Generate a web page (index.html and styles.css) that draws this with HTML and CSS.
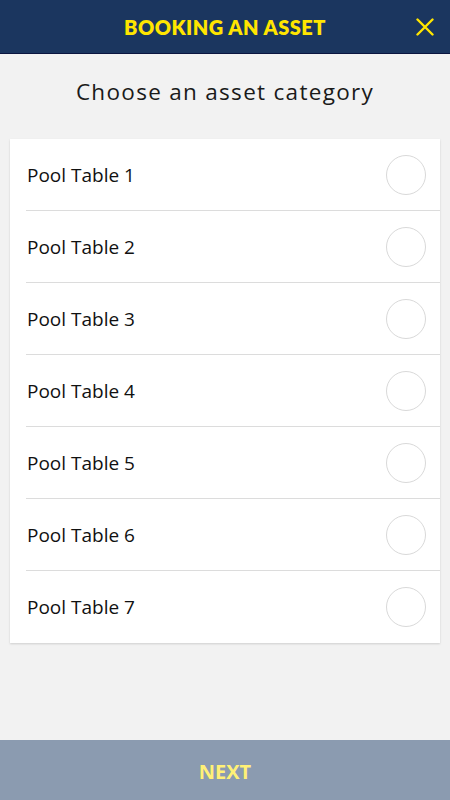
FILE: index.html
```html
<!DOCTYPE html>
<html>
<head>
<meta charset="utf-8">
<link rel="stylesheet" href="styles.css">
</head>
<body>
<div class="app">
  <header class="topbar">
    <div class="title">BOOKING AN ASSET</div>
    <svg class="close" width="18" height="18" viewBox="0 0 18 18"><path d="M1.5 1.5 L16.5 16.5 M16.5 1.5 L1.5 16.5" stroke="#ffe500" stroke-width="2.4" stroke-linecap="round"/></svg>
  </header>
  <main class="content">
    <h1 class="heading">Choose an asset category</h1>
    <ul class="list">
      <li class="row"><span class="label">Pool Table 1</span><span class="radio"></span></li>
      <li class="row"><span class="label">Pool Table 2</span><span class="radio"></span></li>
      <li class="row"><span class="label">Pool Table 3</span><span class="radio"></span></li>
      <li class="row"><span class="label">Pool Table 4</span><span class="radio"></span></li>
      <li class="row"><span class="label">Pool Table 5</span><span class="radio"></span></li>
      <li class="row"><span class="label">Pool Table 6</span><span class="radio"></span></li>
      <li class="row"><span class="label">Pool Table 7</span><span class="radio"></span></li>
    </ul>
  </main>
  <footer class="footer">NEXT</footer>
</div>
</body>
</html>
```
FILE: styles.css
```css
* { box-sizing: border-box; }
html, body { margin: 0; padding: 0; }
body { background: #f2f2f2; font-family: "Open Sans", "Liberation Sans", sans-serif; }
.app { height: 800px; display: flex; flex-direction: column; }
.topbar {
  height: 54px;
  background: #1b365f;
  border-bottom: 1px solid #0b1640;
  display: flex;
  align-items: center;
  justify-content: center;
  position: relative;
  flex-shrink: 0;
}
.title {
  color: #ffe500;
  font-family: "Lato", "Open Sans", sans-serif;
  font-weight: 800;
  font-size: 20px;
  letter-spacing: 0.5px;
  margin-top: 1px;
}
.close { position: absolute; right: 16px; top: 18px; }
.content { flex: 1; padding: 0 10px; }
.heading {
  margin: 0;
  height: 85px;
  display: flex;
  align-items: center;
  justify-content: center;
  font-weight: 400;
  font-size: 22.5px;
  letter-spacing: 1.3px;
  color: #1a1a1a;
  padding-bottom: 10px;
}
.list {
  list-style: none;
  margin: 0;
  padding: 0 0 0 16px;
  background: #fff;
  box-shadow: 0 1px 2px rgba(0,0,0,0.15);
}
.row {
  height: 72px;
  display: flex;
  align-items: center;
  justify-content: space-between;
  padding-right: 14px;
  border-bottom: 1px solid #dcdcdc;
}
.row:last-child { border-bottom: none; }
.label { font-size: 19px; color: #111; padding-left: 1px; }
.radio {
  width: 40px;
  height: 40px;
  border-radius: 50%;
  border: 1px solid #d9d9d9;
}
.footer {
  height: 60px;
  flex-shrink: 0;
  background: #8b9bb0;
  color: #fff176;
  font-weight: 700;
  font-size: 20px;
  display: flex;
  align-items: center;
  justify-content: center;
  padding-top: 2px;
}
```
